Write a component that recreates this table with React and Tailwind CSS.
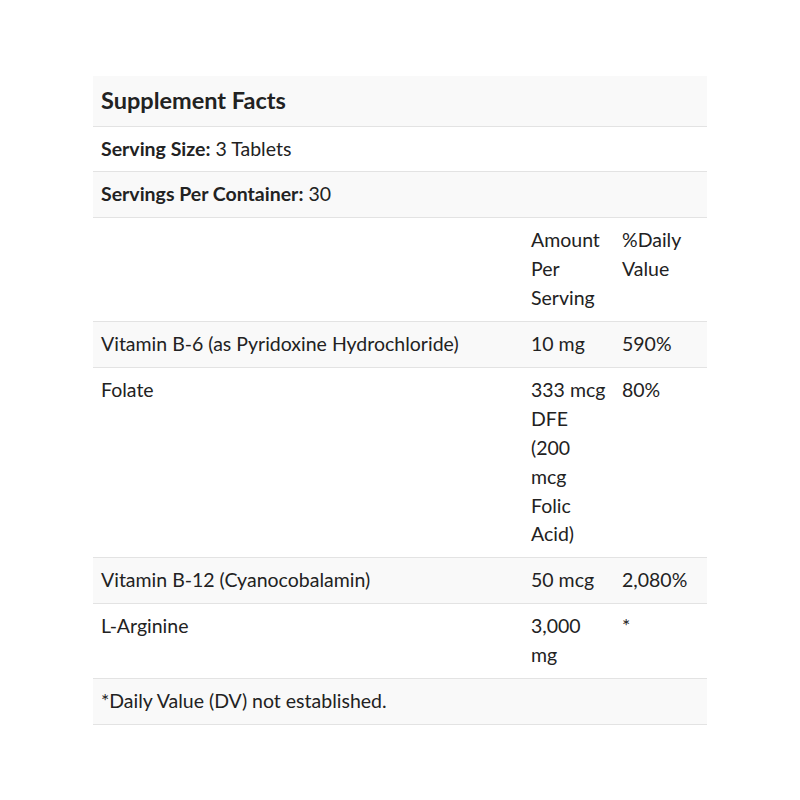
export default function App() {
  const rows = [
    ["Vitamin B-6 (as Pyridoxine Hydrochloride)", "10 mg", "590%"],
    ["Folate", "333 mcg DFE (200 mcg Folic Acid)", "80%"],
    ["Vitamin B-12 (Cyanocobalamin)", "50 mcg", "2,080%"],
    ["L-Arginine", "3,000 mg", "*"],
  ];
  return (
    <div className="min-h-[800px] bg-white pt-[76px] font-['Lato','Liberation_Sans',sans-serif] text-[19.5px] leading-[28.9px] text-[#222]">
      <table className="ml-[93px] w-[614px] table-fixed border-collapse">
        <colgroup>
          <col className="w-[430px]" />
          <col className="w-[91px]" />
          <col className="w-[93px]" />
        </colgroup>
        <tbody>
          <tr className="bg-[#f9f9f9]">
            <td colSpan={3} className="h-[50px] px-2 py-0 text-[23.5px] font-bold">
              Supplement Facts
            </td>
          </tr>
          <tr className="border-t border-[#e3e3e3]">
            <td colSpan={3} className="p-2">
              <b>Serving Size:</b> 3 Tablets
            </td>
          </tr>
          <tr className="border-t border-[#e3e3e3] bg-[#f9f9f9]">
            <td colSpan={3} className="p-2">
              <b>Servings Per Container:</b> 30
            </td>
          </tr>
          <tr className="border-t border-[#e3e3e3]">
            <td className="p-2"></td>
            <td className="p-2 align-top">Amount Per Serving</td>
            <td className="p-2 align-top">%Daily Value</td>
          </tr>
          {rows.map((r, i) => (
            <tr
              key={r[0]}
              className={`border-t border-[#e3e3e3] ${i % 2 === 0 ? "bg-[#f9f9f9]" : ""}`}
            >
              <td className="p-2 align-top">{r[0]}</td>
              <td className="p-2 align-top">{r[1]}</td>
              <td className="p-2 align-top">{r[2]}</td>
            </tr>
          ))}
          <tr className="border-y border-[#e3e3e3] bg-[#f9f9f9]">
            <td colSpan={3} className="p-2">
              *Daily Value (DV) not established.
            </td>
          </tr>
        </tbody>
      </table>
    </div>
  );
}
